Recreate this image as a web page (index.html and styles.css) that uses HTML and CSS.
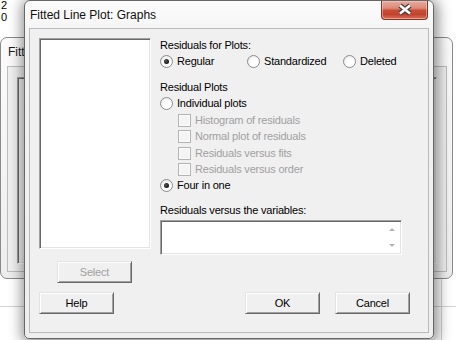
FILE: index.html
```html
<!DOCTYPE html>
<html>
<head>
<meta charset="utf-8">
<link rel="stylesheet" href="styles.css">
</head>
<body>
<div class="desk">
  <div class="cells"><div>2</div><div>0</div></div>
  <div class="hline"></div>
  <div class="vline"></div>

  <div class="bgwin">
    <div class="bgtitle">Fitted Line Plot</div>
    <div class="bgclient"><div class="bgpanel"></div></div>
  </div>

  <div class="dlg">
    <div class="titlebar">
      <span class="title">Fitted Line Plot: Graphs</span>
      <div class="close">
        <svg width="45" height="17" viewBox="0 0 45 17">
          <path d="M18 4.5 L28 12.5 M28 4.5 L18 12.5" stroke="#3f3f3f" stroke-width="5" fill="none"/>
          <path d="M18 4.5 L28 12.5 M28 4.5 L18 12.5" stroke="#ffffff" stroke-width="2.6" fill="none"/>
        </svg>
      </div>
    </div>
    <div class="client">
      <div class="top">
        <div class="listbox"></div>
        <div class="panel">
          <div class="row">Residuals for Plots:</div>
          <div class="row">
            <div class="opt w1"><span class="radio on"></span>Regular</div>
            <div class="opt w2"><span class="radio"></span>Standardized</div>
            <div class="opt"><span class="radio"></span>Deleted</div>
          </div>
          <div class="row g10">Residual Plots</div>
          <div class="row opt"><span class="radio"></span>Individual plots</div>
          <div class="row chk g1"><span class="box"></span>Histogram of residuals</div>
          <div class="row chk"><span class="box"></span>Normal plot of residuals</div>
          <div class="row chk g1"><span class="box"></span>Residuals versus fits</div>
          <div class="row chk"><span class="box"></span>Residuals versus order</div>
          <div class="row opt"><span class="radio on"></span>Four in one</div>
          <div class="row g9">Residuals versus the variables:</div>
          <div class="textbox">
            <div class="sb"><span class="arr up"></span><span class="arr dn"></span></div>
          </div>
        </div>
      </div>
      <div class="selrow"><div class="btn dis">Select</div></div>
      <div class="btnrow">
        <div class="btn">Help</div>
        <div class="spacer"></div>
        <div class="btn">OK</div>
        <div class="btn">Cancel</div>
      </div>
    </div>
  </div>
</div>
</body>
</html>
```

FILE: styles.css
```css
* { box-sizing: border-box; }
html, body { margin: 0; padding: 0; }
body {
  width: 456px; height: 340px; overflow: hidden; background: #fff;
  font-family: "Liberation Sans", Arial, sans-serif; font-size: 11px; color: #000;
}
.desk { position: relative; width: 456px; height: 340px; overflow: hidden; }

.cells { position: absolute; left: 1px; top: -1px; line-height: 12px; font-size: 11px; }
.hline { position: absolute; left: 0; top: 306px; width: 456px; height: 1px; background: #d2d2d2; }
.vline { position: absolute; left: 441px; top: 278px; width: 1px; height: 62px; background: #d2d2d2; }

.bgwin {
  position: absolute; left: 0; top: 37px; width: 453px; height: 242px;
  border: 1px solid #8a8a8a; border-radius: 7px;
  background: linear-gradient(#fbfbfb, #eeeeee);
  display: flex; flex-direction: column; padding: 0 5px 6px 6px;
}
.bgtitle { height: 28px; padding: 7px 0 0 1px; font-size: 12px; line-height: 14px; color: #1a1a1a; }
.bgclient { flex: 1; border: 1px solid #bdbdbd; background: #f0f0f0; padding: 10px 9px 7px 9px; display: flex; }
.bgpanel {
  flex: 1; border: 1px solid; border-color: #a0a0a0 #fff #fff #a0a0a0;
  box-shadow: inset 1px 1px #696969, inset -1px -1px #e3e3e3; background: #f0f0f0;
}

.dlg {
  position: absolute; left: 24px; top: 0; width: 410px; height: 339px;
  border: 1px solid #676767; border-radius: 6px 6px 5px 5px;
  background: linear-gradient(#fcfcfc, #f2f2f2 40px, #eeeeee);
  box-shadow: 1px 2px 14px 3px rgba(0,0,0,0.45);
  display: flex; flex-direction: column; padding: 0 4px 5px 4px;
}
.titlebar { height: 27px; position: relative; }
.title { display: block; padding: 7px 0 0 1px; font-size: 12px; line-height: 14px; color: #101010; }
.close {
  position: absolute; top: 0; right: 1px; width: 47px; height: 19px;
  border: 1px solid #8a3427; border-top: none; border-radius: 0 0 4px 4px;
  background: linear-gradient(#e7aa9c 0%, #dc8a79 40%, #c84c36 52%, #c2432d 75%, #d7735d 100%);
  box-shadow: inset 0 0 0 1px rgba(255,220,210,0.45);
}
.close svg { display: block; }

.client {
  flex: 1; border: 1px solid #bababa; background: #f0f0f0;
  display: flex; flex-direction: column; padding: 8px 18px 0 9px;
}
.top { display: flex; }
.listbox {
  width: 112px; height: 211px; margin-top: 1px; background: #fff;
  border: 1px solid; border-color: #a0a0a0 #fff #fff #a0a0a0;
  box-shadow: inset 1px 1px #696969, inset -1px -1px #e3e3e3;
}
.panel { margin-left: 9px; width: 242px; display: flex; flex-direction: column; letter-spacing: -0.2px; }
.row { height: 16px; line-height: 16px; display: flex; align-items: center; white-space: nowrap; }
.g10 { margin-top: 10px; }
.g9 { margin-top: 9px; }
.g1 { margin-top: 1px; }
.opt { display: flex; align-items: center; height: 16px; }
.w1 { width: 87px; }
.w2 { width: 96px; }
.radio {
  width: 13px; height: 13px; border-radius: 50%; margin-right: 4px; flex: none;
  border: 1px solid #8d8d8d; position: relative;
  background: radial-gradient(circle at 60% 65%, #ffffff 0 35%, #e4e4e4 90%);
}
.radio.on::after {
  content: ""; position: absolute; left: 3px; top: 3px; width: 5px; height: 5px; border-radius: 50%;
  background: radial-gradient(circle at 40% 40%, #5a5a5a, #111 70%);
}
.chk { padding-left: 18px; color: #a0a0a0; }
.box {
  width: 13px; height: 13px; margin-right: 4px; flex: none;
  border: 1px solid #b4b4b4; background: #f4f4f4; box-shadow: inset 0 0 0 1px #fbfbfb;
}
.textbox {
  margin-top: 2px; height: 35px; background: #fff; display: flex; justify-content: flex-end;
  border: 1px solid; border-color: #a0a0a0 #fff #fff #a0a0a0;
  box-shadow: inset 1px 1px #696969, inset -1px -1px #e3e3e3;
}
.sb { width: 19px; display: flex; flex-direction: column; justify-content: space-between; align-items: center; padding: 7px 0 7px 0; }
.arr { width: 0; height: 0; border-left: 3px solid transparent; border-right: 3px solid transparent; }
.arr.up { border-bottom: 3px solid #b3b3b3; }
.arr.dn { border-top: 3px solid #b3b3b3; }

.btn {
  width: 75px; height: 22px; display: flex; align-items: center; justify-content: center;
  background: #f0f0f0; border: 1px solid; border-color: #e3e3e3 #696969 #696969 #e3e3e3;
  box-shadow: inset 1px 1px #fff, inset -1px -1px #a0a0a0; letter-spacing: -0.2px; padding-bottom: 1px;
}
.btn.dis { color: #a0a0a0; }
.selrow { margin-top: 6px; padding-left: 18px; display: flex; }
.btnrow { margin-top: 9px; display: flex; gap: 15px; }
.spacer { flex: 1; }
```
